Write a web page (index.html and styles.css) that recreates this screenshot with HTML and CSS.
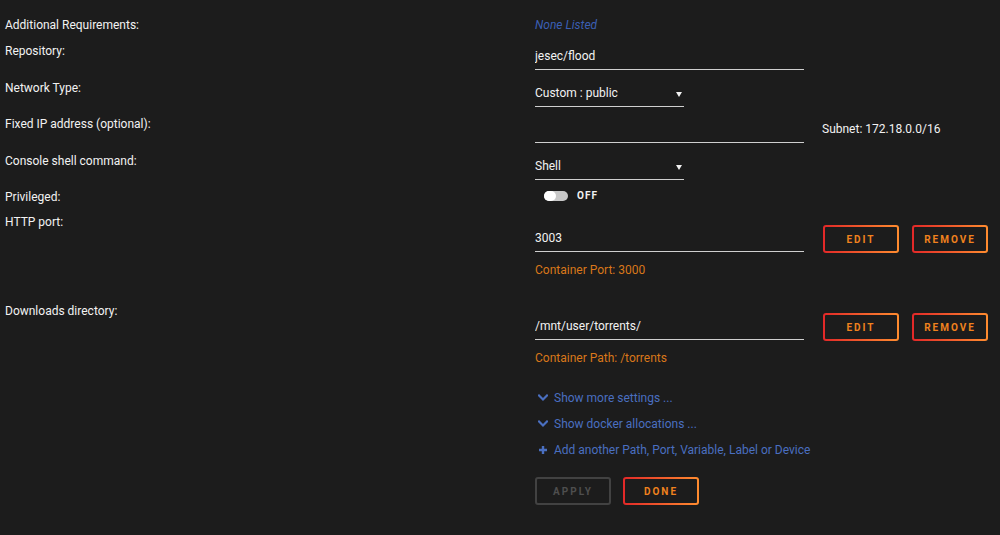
FILE: index.html
```html
<!DOCTYPE html>
<html lang="en">
  <head>
    <meta charset="UTF-8" />
    <meta name="viewport" content="width=device-width, initial-scale=1.0" />
    <title>Update Container</title>
    <link rel="stylesheet" href="styles.css">
  </head>
  <body>
    <form class="settings" id="containerForm">
      <div class="row row-first">
        <label class="row-label">Additional Requirements:</label>
        <div class="row-value"><span class="muted-link">None Listed</span></div>
      </div>

      <div class="row">
        <label class="row-label" for="repo">Repository:</label>
        <div class="row-value">
          <input type="text" id="repo" class="text-input" value="jesec/flood" />
        </div>
      </div>

      <div class="row row-tight">
        <label class="row-label" for="network">Network Type:</label>
        <div class="row-value">
          <div class="select-wrap">
            <select id="network" class="select-input">
              <option>Custom : public</option>
              <option>Bridge</option>
              <option>Host</option>
            </select>
          </div>
        </div>
      </div>

      <div class="row">
        <label class="row-label" for="fixedIp">Fixed IP address (optional):</label>
        <div class="row-value inline">
          <input type="text" id="fixedIp" class="text-input" value="" />
          <span class="hint">Subnet: 172.18.0.0/16</span>
        </div>
      </div>

      <div class="row row-tight">
        <label class="row-label" for="shell">Console shell command:</label>
        <div class="row-value">
          <div class="select-wrap">
            <select id="shell" class="select-input">
              <option>Shell</option>
              <option>Bash</option>
            </select>
          </div>
        </div>
      </div>

      <div class="row">
        <label class="row-label">Privileged:</label>
        <div class="row-value">
          <label class="switch">
            <span class="switch-track"><span class="switch-knob"></span></span>
            <span class="switch-text">OFF</span>
          </label>
        </div>
      </div>

      <div class="row row-tall">
        <label class="row-label" for="httpPort">HTTP port:</label>
        <div class="row-value with-actions">
          <div class="inline">
            <input type="text" id="httpPort" class="text-input" value="3003" />
            <button type="button" class="btn">Edit</button>
            <button type="button" class="btn">Remove</button>
          </div>
          <div class="note">Container Port: 3000</div>
        </div>
      </div>

      <div class="row row-path">
        <label class="row-label" for="downloads">Downloads directory:</label>
        <div class="row-value with-actions">
          <div class="inline">
            <input type="text" id="downloads" class="text-input" value="/mnt/user/torrents/" />
            <button type="button" class="btn">Edit</button>
            <button type="button" class="btn">Remove</button>
          </div>
          <div class="note">Container Path: /torrents</div>
        </div>
      </div>

      <div class="row">
        <div class="row-label"></div>
        <div class="row-value">
          <ul class="links">
            <li>
              <a href="#" class="link">
                <svg class="icon" viewBox="0 0 10 8" width="10" height="8"><path d="M1 1.5 L5 5.5 L9 1.5" fill="none" stroke="currentColor" stroke-width="2.2" stroke-linecap="square"/></svg>
                Show more settings ...
              </a>
            </li>
            <li>
              <a href="#" class="link">
                <svg class="icon" viewBox="0 0 10 8" width="10" height="8"><path d="M1 1.5 L5 5.5 L9 1.5" fill="none" stroke="currentColor" stroke-width="2.2" stroke-linecap="square"/></svg>
                Show docker allocations ...
              </a>
            </li>
            <li>
              <a href="#" class="link">
                <svg class="icon" viewBox="0 0 10 10" width="10" height="10"><path d="M5 1 V9 M1 5 H9" fill="none" stroke="currentColor" stroke-width="2.4"/></svg>
                Add another Path, Port, Variable, Label or Device
              </a>
            </li>
          </ul>

          <div class="form-actions">
            <button type="button" class="btn btn-wide" disabled>Apply</button>
            <button type="submit" class="btn btn-wide">Done</button>
          </div>
        </div>
      </div>
    </form>
  </body>
</html>
```

FILE: styles.css
```css
body {
  margin: 0;
  padding: 18px 0 0 5px;
  background-color: #1c1c1c;
  color: #f2f2f2;
  font-family: Roboto, "Liberation Sans", sans-serif;
  font-size: 12px;
  line-height: 14px;
}
.row {
  display: grid;
  grid-template-columns: 530px 1fr;
  margin-bottom: 11px;
}
.row-label {
  color: #f2f2f2;
}
.row-first {
  margin-bottom: 12px;
}
.row-tight {
  margin-bottom: 10px;
}
.row-tall {
  margin-bottom: 27px;
}
.row-path {
  margin-bottom: 26px;
}
.muted-link {
  color: #3b5fb3;
  font-style: italic;
}
.inline {
  display: flex;
  align-items: center;
}
.text-input {
  width: 269px;
  box-sizing: border-box;
  padding: 5px 0 6px 0;
  border: none;
  border-bottom: 1px solid #cfcfcf;
  background: transparent;
  color: #f2f2f2;
  font: inherit;
  outline: none;
}
.hint {
  margin-left: 18px;
  align-self: flex-start;
  padding-top: 5px;
}
.select-wrap {
  position: relative;
  width: 149px;
  border-bottom: 1px solid #cfcfcf;
}
.select-wrap::after {
  content: "";
  position: absolute;
  right: 2px;
  top: 11px;
  border-left: 3px solid transparent;
  border-right: 3px solid transparent;
  border-top: 5px solid #f2f2f2;
}
.select-input {
  appearance: none;
  -webkit-appearance: none;
  width: 100%;
  padding: 5px 0 6px 0;
  border: none;
  background: transparent;
  color: #f2f2f2;
  font: inherit;
  outline: none;
}
.select-input option {
  background: #1c1c1c;
}
.switch {
  display: flex;
  align-items: center;
  margin-left: 9px;
  height: 12px;
}
.switch-track {
  display: flex;
  width: 24px;
  height: 10px;
  border-radius: 5px;
  background: #c8c8c8;
}
.switch-knob {
  width: 12px;
  height: 10px;
  border-radius: 5px;
  background: #ffffff;
}
.switch-text {
  margin-left: 9px;
  font-size: 10px;
  font-weight: bold;
  letter-spacing: 1px;
}
.with-actions {
  padding-top: 10px;
}
.row-path .with-actions {
  padding-top: 9px;
}
.btn {
  width: 76px;
  height: 28px;
  box-sizing: border-box;
  margin-left: 13px;
  border: 2px solid transparent;
  border-radius: 3px;
  background: linear-gradient(#1c1c1c, #1c1c1c) padding-box,
    linear-gradient(90deg, #e22828, #ff8c2f) border-box;
  color: #f0821e;
  font-family: inherit;
  font-size: 10px;
  font-weight: bold;
  letter-spacing: 2px;
  text-transform: uppercase;
  cursor: pointer;
}
.text-input + .btn {
  margin-left: 19px;
}
.btn:disabled {
  background: #1c1c1c;
  border-color: #424242;
  color: #4e4e4e;
  cursor: default;
}
.note {
  margin-top: 10px;
  color: #d9771a;
}
.links {
  list-style: none;
  margin: 0;
  padding: 0;
}
.links li {
  margin-bottom: 12px;
}
.link {
  display: flex;
  align-items: center;
  color: #4a6fc0;
  text-decoration: none;
}
.icon {
  margin: 0 6px 0 3px;
}
.form-actions {
  display: flex;
  margin-top: 20px;
}
.form-actions .btn {
  margin-left: 0;
  margin-right: 12px;
}
```
